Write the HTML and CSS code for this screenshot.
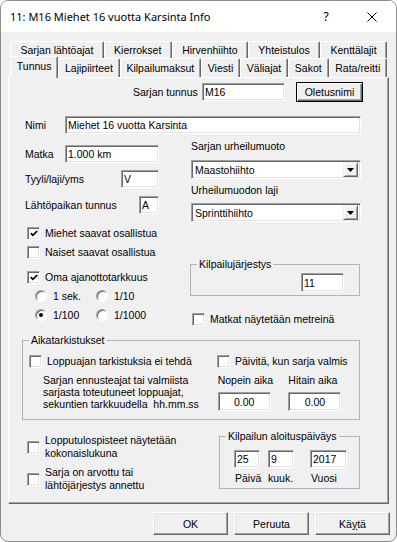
FILE: index.html
```html
<!DOCTYPE html>
<html lang="fi">
<head>
    <meta charset="UTF-8">
    <title>11: M16 Miehet 16 vuotta Karsinta Info</title>
    <link rel="stylesheet" href="styles.css">
</head>
<body>
<div class="window">
    <div class="titlebar">
        <span class="title">11: M16 Miehet 16 vuotta Karsinta Info</span>
        <span class="help">?</span>
        <span class="close">
            <svg width="10" height="10" viewBox="0 0 10 10"><path d="M0.5 0.5 L9.5 9.5 M9.5 0.5 L0.5 9.5" stroke="#000" stroke-width="1"/></svg>
        </span>
    </div>

    <div class="tabs">
        <div class="tab-row back">
            <div class="tab">Sarjan lähtöajat</div>
            <div class="tab">Kierrokset</div>
            <div class="tab">Hirvenhiihto</div>
            <div class="tab">Yhteistulos</div>
            <div class="tab">Kenttälajit</div>
        </div>
        <div class="tab-row front">
            <div class="tab active">Tunnus</div>
            <div class="tab">Lajipiirteet</div>
            <div class="tab">Kilpailumaksut</div>
            <div class="tab">Viesti</div>
            <div class="tab">Väliajat</div>
            <div class="tab">Sakot</div>
            <div class="tab">Rata/reitti</div>
        </div>
    </div>

    <div class="page">
        <div class="row-id">
            <span class="lbl-id">Sarjan tunnus</span>
            <input class="inp w-id" type="text" value="M16">
            <button class="btn btn-default">Oletusnimi</button>
        </div>

        <div class="row-name">
            <span class="lbl-40">Nimi</span>
            <input class="inp w-name" type="text" value="Miehet 16 vuotta Karsinta">
        </div>

        <div class="cols">
            <div class="col-left">
                <div class="field f-matka">
                    <span class="lbl-40">Matka</span>
                    <input class="inp w-matka" type="text" value="1.000 km">
                </div>
                <div class="field f-tyyli">
                    <span class="lbl-tyyli">Tyyli/laji/yms</span>
                    <input class="inp w-tyyli" type="text" value="V">
                </div>
                <div class="field f-lahto">
                    <span class="lbl-lahto">Lähtöpaikan tunnus</span>
                    <input class="inp w-lahto" type="text" value="A">
                </div>

                <div class="check-row c-miehet">
                    <span class="cb"><svg width="8" height="7" viewBox="0 0 8 7"><polyline points="0.8,3.2 2.9,5.4 7.2,1" fill="none" stroke="#000" stroke-width="1.7"/></svg></span>
                    <span>Miehet saavat osallistua</span>
                </div>
                <div class="check-row c-naiset">
                    <span class="cb"></span>
                    <span>Naiset saavat osallistua</span>
                </div>
                <div class="check-row c-oma">
                    <span class="cb"><svg width="8" height="7" viewBox="0 0 8 7"><polyline points="0.8,3.2 2.9,5.4 7.2,1" fill="none" stroke="#000" stroke-width="1.7"/></svg></span>
                    <span>Oma ajanottotarkkuus</span>
                </div>
                <div class="radio-row">
                    <div class="radio"><span class="rb"></span><span>1 sek.</span></div>
                    <div class="radio"><span class="rb"></span><span>1/10</span></div>
                </div>
                <div class="radio-row">
                    <div class="radio"><span class="rb on"></span><span>1/100</span></div>
                    <div class="radio"><span class="rb"></span><span>1/1000</span></div>
                </div>
            </div>

            <div class="col-right">
                <div class="lbl-combo first">Sarjan urheilumuoto</div>
                <div class="combo c1">
                    <span class="val">Maastohiihto</span>
                    <span class="drop"><svg width="7" height="4" viewBox="0 0 7 4"><polygon points="0,0 7,0 3.5,4" fill="#000"/></svg></span>
                </div>
                <div class="lbl-combo second">Urheilumuodon laji</div>
                <div class="combo c2">
                    <span class="val">Sprinttihiihto</span>
                    <span class="drop"><svg width="7" height="4" viewBox="0 0 7 4"><polygon points="0,0 7,0 3.5,4" fill="#000"/></svg></span>
                </div>

                <fieldset class="group g-order">
                    <legend>Kilpailujärjestys</legend>
                    <input class="inp w-order" type="text" value="11">
                </fieldset>

                <div class="check-row c-matkat">
                    <span class="cb"></span>
                    <span>Matkat näytetään metreinä</span>
                </div>
            </div>
        </div>

        <fieldset class="group g-times">
            <legend>Aikatarkistukset</legend>
            <div class="times-top">
                <div class="check-row c-loppu">
                    <span class="cb"></span>
                    <span>Loppuajan tarkistuksia ei tehdä</span>
                </div>
                <div class="check-row">
                    <span class="cb"></span>
                    <span>Päivitä, kun sarja valmis</span>
                </div>
            </div>
            <div class="times-bottom">
                <p class="times-note">Sarjan ennusteajat tai valmiista<br>sarjasta toteutuneet loppuajat,<br>sekuntien tarkkuudella&nbsp; hh.mm.ss</p>
                <div class="time-box">
                    <div class="time-lbl">Nopein aika</div>
                    <input class="inp w-time" type="text" value="0.00">
                </div>
                <div class="time-box">
                    <div class="time-lbl">Hitain aika</div>
                    <input class="inp w-time" type="text" value="0.00">
                </div>
            </div>
        </fieldset>

        <div class="bottom">
            <div class="bottom-checks">
                <div class="check-row multi m1">
                    <span class="cb"></span>
                    <span>Lopputulospisteet näytetään<br>kokonaislukuna</span>
                </div>
                <div class="check-row multi m2">
                    <span class="cb"></span>
                    <span>Sarja on arvottu tai<br>lähtöjärjestys annettu</span>
                </div>
            </div>

            <fieldset class="group g-date">
                <legend>Kilpailun aloituspäiväys</legend>
                <div class="date-grid">
                    <input class="inp w-day" type="text" value="25">
                    <input class="inp w-day" type="text" value="9">
                    <input class="inp w-year" type="text" value="2017">
                    <span class="date-lbl pad">Päivä</span>
                    <span class="date-lbl">kuuk.</span>
                    <span class="date-lbl pad">Vuosi</span>
                </div>
            </fieldset>
        </div>
    </div>

    <div class="buttons">
        <button class="btn">OK</button>
        <button class="btn">Peruuta</button>
        <button class="btn">Kä<u>y</u>tä</button>
    </div>
</div>
</body>
</html>
```

FILE: styles.css
```css
body {
    margin: 0;
    font-family: "Liberation Sans", Arial, sans-serif;
    font-size: 10.5px;
    color: #000;
    background-color: #fff;
}

.window {
    width: 397px;
    height: 542px;
    box-sizing: border-box;
    border: 1px solid #8c8c8c;
    border-radius: 8px;
    overflow: hidden;
    background-color: #f0f0f0;
}

/* title bar */

.titlebar {
    height: 31px;
    display: flex;
    align-items: center;
    padding-left: 9px;
    background-color: #fff;
    font-family: "Noto Sans", sans-serif;
    font-size: 11px;
}

.title {
    flex: 1;
}

.help {
    width: 12px;
    text-align: center;
    font-size: 12px;
}

.close {
    display: flex;
    margin-left: 35px;
    margin-right: 19px;
}

/* tabs */

.tabs {
    margin: 9px 0 0 9px;
    width: 377px;
}

.tab-row {
    display: flex;
}

.tab-row.back {
    height: 17px;
}

.tab-row.front {
    height: 19px;
    align-items: flex-end;
}

.tab {
    flex: 1 1 auto;
    height: 100%;
    box-sizing: border-box;
    display: flex;
    align-items: center;
    justify-content: center;
    white-space: nowrap;
    border-left: 1px solid #fff;
    border-top: 1px solid #fff;
    border-right: 1px solid #696969;
    border-radius: 2px 2px 0 0;
    box-shadow: inset -1px 0 0 #a0a0a0;
    background-color: #f0f0f0;
}

.tab.active {
    height: 22px;
    margin-bottom: -1px;
    padding-bottom: 3px;
    position: relative;
    z-index: 1;
}

/* tab page */

.page {
    margin-left: 7px;
    width: 381px;
    height: 427px;
    box-sizing: border-box;
    border: 1px solid;
    border-color: #fff #696969 #696969 #fff;
    box-shadow: inset -1px -1px 0 #a0a0a0;
}

.inp {
    font: inherit;
    color: #000;
    height: 18px;
    margin: 0;
    padding: 0 2px;
    box-sizing: border-box;
    border: 1px solid;
    border-color: #a0a0a0 #fff #fff #a0a0a0;
    box-shadow: inset 1px 1px 0 #696969, inset -1px -1px 0 #e3e3e3;
    background-color: #fff;
    outline: none;
}

.btn {
    font: inherit;
    color: #000;
    width: 75px;
    height: 23px;
    padding: 0;
    box-sizing: border-box;
    border: 1px solid;
    border-color: #fff #696969 #696969 #fff;
    box-shadow: inset -1px -1px 0 #a0a0a0, inset 1px 1px 0 #e3e3e3;
    background-color: #f0f0f0;
}

.btn-default {
    width: 67px;
    height: 20px;
    margin-left: 11px;
    border-color: #000;
    box-shadow: inset 1px 1px 0 #fff, inset -1px -1px 0 #696969, inset -2px -2px 0 #a0a0a0;
}

.row-id {
    display: flex;
    align-items: center;
    height: 20px;
    margin-top: 4px;
    padding-left: 124px;
}

.lbl-id {
    width: 69px;
}

.w-id {
    width: 83px;
}

.row-name {
    display: flex;
    align-items: center;
    margin-top: 14px;
    padding-left: 16px;
}

.lbl-40 {
    width: 40px;
}

.w-name {
    width: 296px;
}

.cols {
    display: flex;
    align-items: flex-start;
}

.col-left {
    width: 165px;
    padding-left: 16px;
}

.col-right {
    width: 171px;
}

.field {
    display: flex;
    align-items: center;
    height: 18px;
}

.f-matka {
    margin-top: 11px;
}

.f-tyyli {
    margin-top: 7px;
}

.f-lahto {
    margin-top: 8px;
}

.w-matka {
    width: 94px;
}

.lbl-tyyli {
    width: 96px;
}

.w-tyyli {
    width: 38px;
}

.lbl-lahto {
    width: 114px;
}

.w-lahto {
    width: 20px;
}

/* checkboxes and radios */

.check-row {
    display: flex;
    align-items: center;
    gap: 5px;
    height: 14px;
    white-space: nowrap;
}

.cb {
    flex: none;
    width: 13px;
    height: 13px;
    box-sizing: border-box;
    display: flex;
    align-items: center;
    justify-content: center;
    border: 1px solid;
    border-color: #a0a0a0 #fff #fff #a0a0a0;
    box-shadow: inset 1px 1px 0 #696969, inset -1px -1px 0 #e3e3e3;
    background-color: #fff;
}

.c-miehet {
    margin: 12px 0 0 2px;
}

.c-naiset {
    margin: 5px 0 0 2px;
}

.c-oma {
    margin: 11px 0 0 2px;
}

.radio-row {
    display: flex;
    height: 14px;
    margin: 5px 0 0 10px;
}

.radio {
    display: flex;
    align-items: center;
    gap: 6px;
    width: 61px;
}

.rb {
    flex: none;
    width: 12px;
    height: 12px;
    box-sizing: border-box;
    border-radius: 50%;
    border: 1px solid;
    border-color: #a0a0a0 #fff #fff #a0a0a0;
    box-shadow: inset 1px 1px 0 #696969;
    background-color: #fff;
    display: flex;
    align-items: center;
    justify-content: center;
}

.rb.on::after {
    content: "";
    width: 4px;
    height: 4px;
    border-radius: 50%;
    background-color: #000;
}

/* right column */

.lbl-combo {
    line-height: 14px;
    padding-left: 1px;
}

.lbl-combo.first {
    margin-top: 5px;
}

.lbl-combo.second {
    margin-top: 4px;
}

.combo {
    display: flex;
    align-items: center;
    width: 170px;
    height: 19px;
    margin-left: 1px;
    box-sizing: border-box;
    padding: 2px;
    border: 1px solid;
    border-color: #a0a0a0 #fff #fff #a0a0a0;
    box-shadow: inset 1px 1px 0 #696969, inset -1px -1px 0 #e3e3e3;
    background-color: #fff;
}

.combo.c1 {
    margin-top: 7px;
}

.combo.c2 {
    margin-top: 6px;
}

.combo .val {
    flex: 1;
    padding-left: 1px;
}

.combo .drop {
    width: 15px;
    height: 15px;
    box-sizing: border-box;
    display: flex;
    align-items: center;
    justify-content: center;
    border: 1px solid;
    border-color: #f0f0f0 #696969 #696969 #f0f0f0;
    box-shadow: inset 1px 1px 0 #fff, inset -1px -1px 0 #a0a0a0;
    background-color: #f0f0f0;
}

.group {
    margin: 0;
    padding: 0;
    min-width: 0;
    box-sizing: border-box;
    border: 1px solid #b4b4b4;
}

.group legend {
    padding: 0 2px;
    margin-left: 6px;
    line-height: 14px;
}

.g-order {
    width: 170px;
    margin-top: 35px;
    padding: 2px 0 3px 0;
}

.w-order {
    width: 43px;
    height: 19px;
    margin-left: 110px;
}

.c-matkat {
    margin: 16px 0 0 2px;
}

/* Aikatarkistukset */

.g-times {
    width: 338px;
    margin: 7px 0 0 13px;
    padding: 0 0 8px 0;
}

.times-top {
    display: flex;
    margin-top: 7px;
    padding-left: 6px;
}

.c-loppu {
    width: 188px;
}

.times-bottom {
    display: flex;
    margin-top: 6px;
}

.times-note {
    margin: 0 0 0 20px;
    width: 178px;
    line-height: 12px;
    white-space: nowrap;
}

.time-box {
    width: 72px;
}

.time-lbl {
    line-height: 12px;
}

.w-time {
    width: 53px;
    height: 19px;
    margin-top: 6px;
    text-align: center;
}

/* bottom part */

.bottom {
    display: flex;
    align-items: flex-start;
    margin-top: 9px;
}

.bottom-checks {
    width: 192px;
    margin-left: 18px;
}

.check-row.multi {
    height: auto;
    line-height: 13px;
}

.m1 {
    margin-top: 5px;
}

.m2 {
    margin-top: 6px;
}

.g-date {
    width: 141px;
    padding: 7px 0 3px 0;
}

.date-grid {
    display: grid;
    grid-template-columns: 34px 42px 37px;
    row-gap: 3px;
    padding-left: 14px;
}

.w-day {
    width: 26px;
}

.w-year {
    width: 37px;
}

.date-lbl {
    line-height: 14px;
}

.date-lbl.pad {
    padding-left: 1px;
}

/* dialog buttons */

.buttons {
    display: flex;
    justify-content: flex-end;
    gap: 6px;
    margin-top: 8px;
    padding-right: 6px;
}
```
